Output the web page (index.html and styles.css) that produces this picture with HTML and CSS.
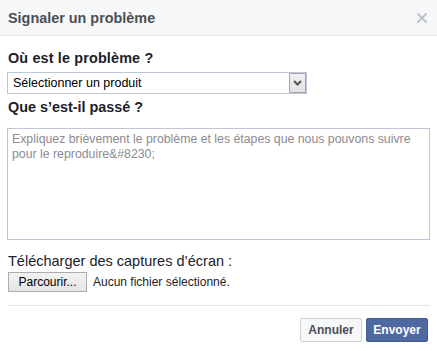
FILE: index.html
```html
<!DOCTYPE html>
<html lang="fr">
<head>
<meta charset="utf-8">
<title>Signaler un problème</title>
<link rel="stylesheet" href="styles.css">
</head>
<body>
<div class="dialog">
  <div class="header">
    <span class="title">Signaler un problème</span>
    <svg class="close" width="10" height="10" viewBox="0 0 10 10"><path d="M1 1 L9 9 M9 1 L1 9" stroke="#bec2c9" stroke-width="2" stroke-linecap="square"/></svg>
  </div>
  <div class="body">
    <div class="label label-first">Où est le problème ?</div>
    <div class="select">
      <span class="select-text">Sélectionner un produit</span>
      <span class="select-btn"><svg width="9" height="6" viewBox="0 0 9 6"><path d="M1 1 L4.5 4.5 L8 1" fill="none" stroke="#5b5160" stroke-width="2"/></svg></span>
    </div>
    <div class="label label-second">Que s’est-il passé ?</div>
    <textarea class="area" placeholder="Expliquez brièvement le problème et les étapes que nous pouvons suivre pour le reproduire&amp;#8230;"></textarea>
    <div class="upload-label">Télécharger des captures d’écran :</div>
    <div class="file-row">
      <span class="file-btn">Parcourir...</span>
      <span class="file-name">Aucun fichier sélectionné.</span>
    </div>
    <div class="sep"></div>
    <div class="footer">
      <span class="btn btn-cancel">Annuler</span>
      <span class="btn btn-send">Envoyer</span>
    </div>
  </div>
</div>
</body>
</html>
```

FILE: styles.css
```css
* { box-sizing: border-box; }
html, body { margin: 0; padding: 0; background: #fff; }
body { font-family: "Liberation Sans", Arial, sans-serif; color: #1d2129; }
.dialog { width: 437px; height: 351px; background: #fff; }
.header {
  height: 36px;
  background: #f6f7f9;
  border-bottom: 1px solid #e5e5e5;
  display: flex;
  align-items: center;
  justify-content: space-between;
  padding: 0 10px 0 8px;
}
.title { font-size: 14.4px; font-weight: bold; color: #4b4f56; }
.close { display: block; }
.body { padding: 0 7px 0 7px; }
.label { font-size: 14.4px; font-weight: bold; line-height: 20px; color: #1d2129; padding-left: 1px; }
.label-first { margin-top: 12px; letter-spacing: 0.15px; }
.label-second { margin-top: 3px; }
.select {
  margin-top: 4px;
  width: 300px;
  height: 22px;
  border: 1px solid #bdc7d8;
  display: flex;
  align-items: stretch;
  justify-content: space-between;
}
.select-text { font-size: 12.5px; line-height: 20px; padding-left: 5px; color: #000; }
.select-btn {
  width: 17px;
  border: 1px solid #a6a6a6;
  background: linear-gradient(#f0f0f0, #e2e2e2);
  display: flex;
  align-items: center;
  justify-content: center;
}
.select-btn svg { display: block; }
.area {
  display: block;
  margin: 11px 0 0 0;
  width: 423px;
  height: 112px;
  border: 1px solid #bdc7d8;
  padding: 3px 4px;
  font-family: "Liberation Sans", Arial, sans-serif;
  font-size: 12.3px;
  line-height: 15px;
  resize: none;
  outline: none;
}
.area::placeholder { color: #8d8a93; opacity: 1; }
.upload-label { margin-top: 11px; font-size: 14.5px; line-height: 20px; color: #1d2129; padding-left: 1px; }
.file-row { margin-top: 1px; display: flex; align-items: center; padding-left: 1px; }
.file-btn {
  width: 79px;
  height: 20px;
  border: 1px solid #acacac;
  background: linear-gradient(#f2f2f2, #e4e4e4);
  font-size: 12px;
  line-height: 18px;
  text-align: center;
  color: #000;
}
.file-name { margin-left: 6px; font-size: 12px; color: #1d2129; }
.sep { margin: 13px 0 0 1px; height: 1px; background: #e5e5e5; }
.footer { margin-top: 12px; display: flex; justify-content: flex-end; gap: 4px; padding-right: 2px; }
.btn {
  height: 24px;
  font-size: 12px;
  font-weight: bold;
  line-height: 22px;
  text-align: center;
  border: 1px solid;
  border-radius: 2px;
}
.btn-cancel { width: 62px; background: #f6f7f9; border-color: #ced0d4; color: #4b4f56; }
.btn-send { width: 62px; background: #4e69a2; border-color: #435a8b; color: #fff; }
```
